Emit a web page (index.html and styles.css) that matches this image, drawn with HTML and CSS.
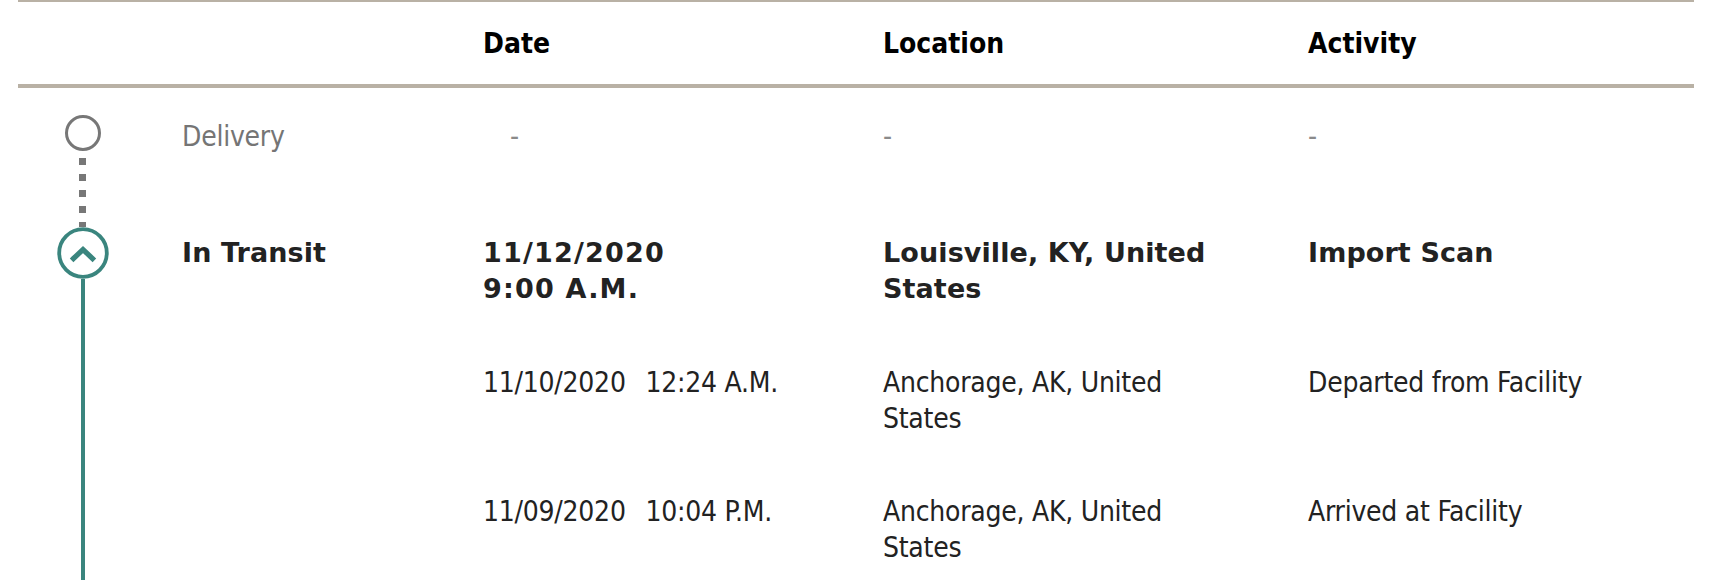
FILE: index.html
```html
<!DOCTYPE html>
<html lang="en">
<head>
<meta charset="utf-8">
<title>Shipment progress</title>
<link rel="stylesheet" href="styles.css">
</head>
<body>
<div class="progress">
  <div class="head">
    <div class="hcell">Date</div>
    <div class="hcell">Location</div>
    <div class="hcell">Activity</div>
  </div>
  <div class="body">
    <div class="timeline">
      <span class="dot-pending"></span>
      <span class="link-dotted"></span>
      <span class="dot-current">
        <svg width="52" height="52" viewBox="0 0 52 52" aria-hidden="true">
          <circle cx="26" cy="26" r="23.8" fill="#fff" stroke="#3a857e" stroke-width="3.8"/>
          <polyline points="16.5,31.5 26,22.5 35.5,31.5" fill="none" stroke="#3a857e" stroke-width="5.2" stroke-linecap="square" stroke-linejoin="miter"/>
        </svg>
      </span>
      <span class="link-solid"></span>
    </div>
    <div class="rows">
      <div class="row row-pending">
        <div class="status">Delivery</div>
        <div class="cell empty empty-date">-</div>
        <div class="cell empty">-</div>
        <div class="cell empty">-</div>
      </div>
      <div class="row row-current">
        <div class="status">In Transit</div>
        <div class="cell date-cell"><span class="date-block">11/12/2020</span><span class="date-block">9:00 A.M.</span></div>
        <div class="cell loc">Louisville, KY, United States</div>
        <div class="cell">Import Scan</div>
      </div>
      <div class="row">
        <div class="status"></div>
        <div class="cell">11/10/2020 <span class="time">12:24 A.M.</span></div>
        <div class="cell loc">Anchorage, AK, United States</div>
        <div class="cell">Departed from Facility</div>
      </div>
      <div class="row row-last">
        <div class="status"></div>
        <div class="cell">11/09/2020 <span class="time">10:04 P.M.</span></div>
        <div class="cell loc">Anchorage, AK, United States</div>
        <div class="cell">Arrived at Facility</div>
      </div>
    </div>
  </div>
</div>
</body>
</html>
```
FILE: styles.css
```css
html, body {
  margin: 0;
  padding: 0;
  background: #ffffff;
}

body {
  font-family: "DejaVu Sans Condensed", "DejaVu Sans", sans-serif;
  font-stretch: condensed;
  font-size: 28px;
  line-height: 36px;
  color: #222222;
  overflow: hidden;
  height: 580px;
}

.progress {
  margin: 0 30px 0 18px;
}

.head {
  display: grid;
  grid-template-columns: 400px 425px 1fr;
  border-top: 2px solid #b9b1a5;
  border-bottom: 4px solid #b9b1a5;
  padding: 24px 0 22px 465px;
  font-weight: bold;
  color: #000000;
}

.body {
  display: flex;
  align-items: stretch;
}

.timeline {
  width: 129px;
  flex: 0 0 129px;
  margin-right: 35px;
  display: flex;
  flex-direction: column;
  align-items: center;
  padding-top: 27px;
  min-height: 465px;
}

.dot-pending {
  display: block;
  width: 30px;
  height: 30px;
  border: 3.2px solid #777777;
  border-radius: 50%;
  box-sizing: content-box;
}

.link-dotted {
  display: block;
  width: 7px;
  height: 76px;
  background: repeating-linear-gradient(
    to bottom,
    transparent 0,
    transparent 7px,
    #777777 7px,
    #777777 14px,
    transparent 14px,
    transparent 16px
  );
}

.dot-current {
  display: block;
  width: 52px;
  height: 52px;
}

.dot-current svg {
  display: block;
}

.link-solid {
  display: block;
  width: 4px;
  flex: 1;
  background: #3a857e;
}

.rows {
  flex: 1;
  padding-top: 31px;
  letter-spacing: -0.25px;
}

.row {
  display: grid;
  grid-template-columns: 301px 400px 425px 1fr;
  margin-bottom: 57px;
}

.row-last {
  margin-bottom: 0;
}

.row-pending {
  margin-bottom: 80px;
}

.row-current {
  font-family: "DejaVu Sans", sans-serif;
  font-stretch: normal;
  font-size: 27px;
  font-weight: bold;
  letter-spacing: 0.1px;
  margin-bottom: 58px;
}

.row-current .date-cell {
  letter-spacing: 1.2px;
}

.row-pending .status {
  color: #757575;
}

.loc {
  padding-right: 80px;
}

.empty {
  color: #8a8a8a;
}

.empty-date {
  padding-left: 27px;
}

.date-block {
  display: block;
}

.time {
  margin-left: 12px;
}
```
